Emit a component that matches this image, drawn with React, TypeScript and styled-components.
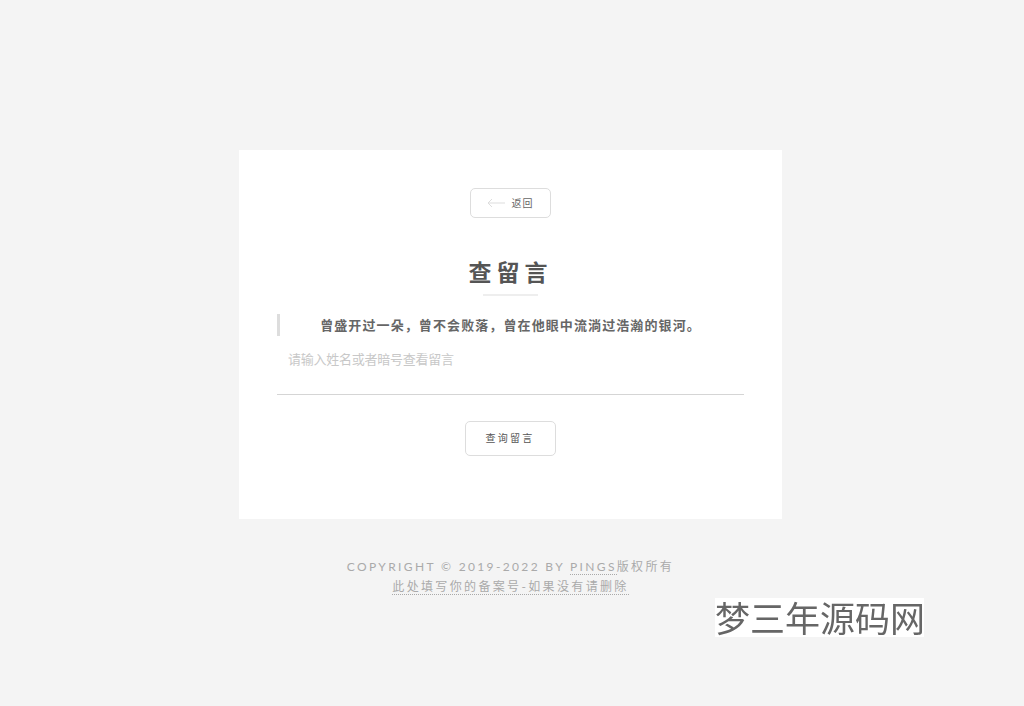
import styled, { createGlobalStyle } from "styled-components";

const GlobalStyle = createGlobalStyle`
  html, body {
    margin: 0;
    padding: 0;
    background: #f4f4f4;
  }
  body {
    font-family: "Lato", "Noto Sans CJK SC", sans-serif;
    color: #555;
  }
`;

const Page = styled.div`
  min-height: 706px;
  padding: 150px 3px 0 0;
  box-sizing: border-box;
  display: flex;
  flex-direction: column;
  align-items: center;
  position: relative;
  overflow: hidden;
`;

const Card = styled.main`
  width: 543px;
  height: 369px;
  box-sizing: border-box;
  background: #fff;
  padding: 38px 38px 0;
  display: flex;
  flex-direction: column;
  align-items: center;
`;

const BackButton = styled.a`
  width: 81px;
  height: 30px;
  box-sizing: border-box;
  border: 1px solid #ddd;
  border-radius: 5px;
  display: flex;
  align-items: center;
  justify-content: center;
  gap: 7px;
  padding: 0 1px 2px 0;
  font-size: 10px;
  letter-spacing: 1px;
  color: #666;

  svg {
    margin-top: 2px;
  }
`;

const Title = styled.h1`
  margin: 41px 0 0;
  height: 28px;
  font-size: 23px;
  line-height: 26px;
  font-weight: 700;
  letter-spacing: 5px;
  color: #555;
`;

const TitleRule = styled.div`
  width: 55px;
  height: 2px;
  margin-top: 7px;
  background: #eee;
`;

const Quote = styled.blockquote`
  align-self: stretch;
  margin: 18px 0 0;
  height: 22px;
  box-sizing: border-box;
  border-left: 3px solid #ddd;
  display: flex;
  align-items: center;
  justify-content: center;
  padding: 0 3px 2px 0;
  font-size: 13px;
  font-weight: 700;
  letter-spacing: 1.1px;
  color: #666;
`;

const SearchInput = styled.input`
  align-self: stretch;
  margin-top: 12px;
  height: 47px;
  box-sizing: border-box;
  border: 0;
  border-bottom: 1px solid #d5d5d5;
  outline: 0;
  padding: 0 12px 26px 11px;
  background: transparent;
  font-family: "Noto Sans CJK SC", sans-serif;
  font-size: 13px;
  letter-spacing: -0.25px;
  color: #555;

  &::placeholder {
    color: #c8c8c8;
    opacity: 1;
  }
`;

const SubmitButton = styled.button`
  margin-top: 26px;
  width: 91px;
  height: 35px;
  box-sizing: border-box;
  border: 1px solid #ddd;
  border-radius: 5px;
  background: #fff;
  padding: 0 1px 2px 0;
  font-family: "Noto Sans CJK SC", sans-serif;
  font-size: 10px;
  letter-spacing: 2.2px;
  color: #555;
`;

const Footer = styled.footer`
  margin-top: 38px;
  text-align: center;
  font-size: 12px;
  line-height: 20px;
  letter-spacing: 2.35px;
  color: #aaa;
`;

const FooterLink = styled.a`
  color: #aaa;
  border-bottom: 1px dotted #aaa;
`;

const Watermark = styled.div`
  position: absolute;
  left: 715px;
  top: 598px;
  width: 209px;
  height: 39px;
  background: #fff;
  text-align: center;
  font-family: "Noto Sans CJK SC", sans-serif;
  font-size: 35px;
  line-height: 37px;
  white-space: nowrap;
  color: #666;
  filter: blur(0.5px);
`;

const BackArrow = () => (
  <svg width="18" height="10" viewBox="0 0 18 10" fill="none" stroke="#ddd" strokeWidth="1">
    <path d="M18 5H1M5 1L1 5l4 4" />
  </svg>
);

export default function App() {
  return (
    <>
      <GlobalStyle />
      <Page>
        <Card>
          <BackButton>
            <BackArrow />
            返回
          </BackButton>
          <Title>查留言</Title>
          <TitleRule />
          <Quote>曾盛开过一朵，曾不会败落，曾在他眼中流淌过浩瀚的银河。</Quote>
          <SearchInput placeholder="请输入姓名或者暗号查看留言" />
          <SubmitButton>查询留言</SubmitButton>
        </Card>
        <Footer>
          COPYRIGHT © 2019-2022 BY <FooterLink>PINGS</FooterLink>版权所有
          <br />
          <FooterLink>此处填写你的备案号-如果没有请删除</FooterLink>
        </Footer>
        <Watermark>梦三年源码网</Watermark>
      </Page>
    </>
  );
}
